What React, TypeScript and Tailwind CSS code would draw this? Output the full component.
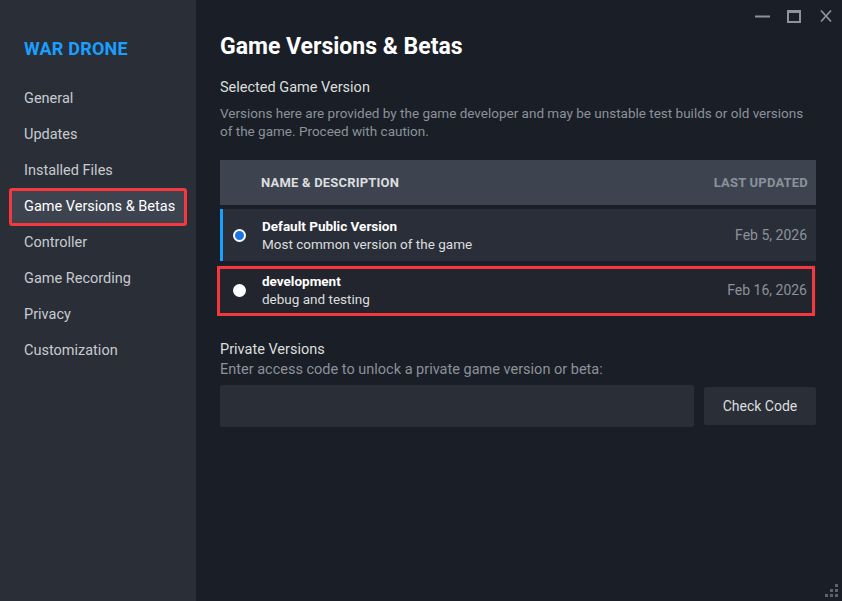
const navItems = [
  "General",
  "Updates",
  "Installed Files",
  "Game Versions & Betas",
  "Controller",
  "Game Recording",
  "Privacy",
  "Customization",
]

const versions = [
  { name: "Default Public Version", desc: "Most common version of the game", date: "Feb 5, 2026", selected: true },
  { name: "development", desc: "debug and testing", date: "Feb 16, 2026", selected: false },
]

export default function App() {
  return (
    <div
      className="relative flex h-[601px] w-[842px] overflow-hidden bg-[#1a1e26] text-[#dcdedf]"
      style={{ fontFamily: "Roboto, 'Noto Sans', sans-serif" }}
    >
      {/* sidebar */}
      <aside className="flex w-[196px] shrink-0 flex-col bg-[#2a2e37] pt-[35px]">
        <div className="px-6 text-[18px] font-bold tracking-[0.2px] text-[#1a9fff]">WAR DRONE</div>
        <nav className="mt-[19px] flex flex-col px-[10px]">
          {navItems.map((item) => {
            const active = item === "Game Versions & Betas"
            return (
              <div
                key={item}
                className={
                  active
                    ? "flex h-[36px] items-center whitespace-nowrap rounded-[2px] bg-[#3d4450] pl-[14px] pr-[6px] text-[14.5px] text-white outline outline-[3px] -outline-offset-[2px] outline-[#f5383d]"
                    : "flex h-[36px] items-center whitespace-nowrap px-[14px] text-[14.5px] text-[#c7cbd1]"
                }
              >
                {item}
              </div>
            )
          })}
        </nav>
      </aside>

      {/* main */}
      <main className="flex-1 pl-[24px] pr-[26px] pt-[32px]">
        <h1 className="text-[23px] font-bold leading-[30px] text-white">Game Versions &amp; Betas</h1>
        <h2 className="mt-[16px] text-[14.5px] leading-[20px] text-[#dcdedf]">Selected Game Version</h2>
        <p className="mt-[6px] text-[13.5px] leading-[18px] text-[#8b929a]">
          Versions here are provided by the game developer and may be unstable test builds or old versions of the
          game. Proceed with caution.
        </p>

        <div className="mt-[20px] flex h-[45px] items-center justify-between bg-[#3d4450] pl-[41px] pr-[8px] text-[13px] font-bold tracking-[0.2px]">
          <span className="text-[#dcdedf]">NAME &amp; DESCRIPTION</span>
          <span className="text-[#8b929a]">LAST UPDATED</span>
        </div>

        <div className="mt-[4px] flex flex-col gap-[4px]">
          {versions.map((v) => (
            <div
              key={v.name}
              className={
                v.selected
                  ? "relative flex h-[52px] items-center border-l-[3px] border-[#1a9fff] bg-[#2a2e38] pl-[10px] pr-[9px]"
                  : "relative flex h-[50px] items-center bg-[#22252d] pl-[13px] pr-[9px]"
              }
            >
              {v.selected ? (
                <span className="flex h-[13px] w-[13px] shrink-0 items-center justify-center rounded-full bg-white">
                  <span className="h-[9px] w-[9px] rounded-full bg-[#1a73e8]" />
                </span>
              ) : (
                <span className="h-[13px] w-[13px] shrink-0 rounded-full bg-white" />
              )}
              <div className="ml-[16px] flex flex-col">
                <span className="text-[13.5px] font-bold leading-[18px] text-white">{v.name}</span>
                <span className="text-[13.5px] leading-[19px] text-[#dcdedf]">{v.desc}</span>
              </div>
              <span className="ml-auto text-[14px] text-[#8b929a]">{v.date}</span>
              {!v.selected && (
                <span className="pointer-events-none absolute -left-[3px] right-[1px] top-[1px] -bottom-[1px] border-[3px] border-[#f5383d]" />
              )}
            </div>
          ))}
        </div>

        <h2 className="mt-[25px] text-[14.5px] leading-[20px] text-[#dcdedf]">Private Versions</h2>
        <p className="text-[14.5px] leading-[20px] text-[#8b929a]">Enter access code to unlock a private game version or beta:</p>
        <div className="mt-[5px] flex items-center gap-[10px]">
          <div className="h-[42px] flex-1 rounded-[2px] bg-[#2a2e37]" />
          <button className="h-[38px] w-[112px] rounded-[2px] bg-[#2a2e37] text-[14px] text-[#dcdedf]">Check Code</button>
        </div>
      </main>

      {/* window controls */}
      <svg className="absolute left-[750px] top-[6px]" width="90" height="20" viewBox="0 0 90 20" fill="none">
        <line x1="5" y1="10.5" x2="20" y2="10.5" stroke="#8d939b" strokeWidth="2" />
        <rect x="38" y="5" width="12" height="11" stroke="#8d939b" strokeWidth="2" />
        <line x1="37" y1="5.5" x2="51" y2="5.5" stroke="#8d939b" strokeWidth="3" />
        <path d="M71 4.5 L81 15.5 M81 4.5 L71 15.5" stroke="#8d939b" strokeWidth="1.8" />
      </svg>

      {/* resize grip */}
      <div className="absolute bottom-[4px] right-[4px] grid grid-cols-3 gap-[2px]">
        <span className="h-[3px] w-[3px]" />
        <span className="h-[3px] w-[3px]" />
        <span className="h-[3px] w-[3px] bg-[#5c6370]" />
        <span className="h-[3px] w-[3px]" />
        <span className="h-[3px] w-[3px] bg-[#5c6370]" />
        <span className="h-[3px] w-[3px] bg-[#5c6370]" />
        <span className="h-[3px] w-[3px] bg-[#5c6370]" />
        <span className="h-[3px] w-[3px] bg-[#5c6370]" />
        <span className="h-[3px] w-[3px] bg-[#5c6370]" />
      </div>
    </div>
  )
}
